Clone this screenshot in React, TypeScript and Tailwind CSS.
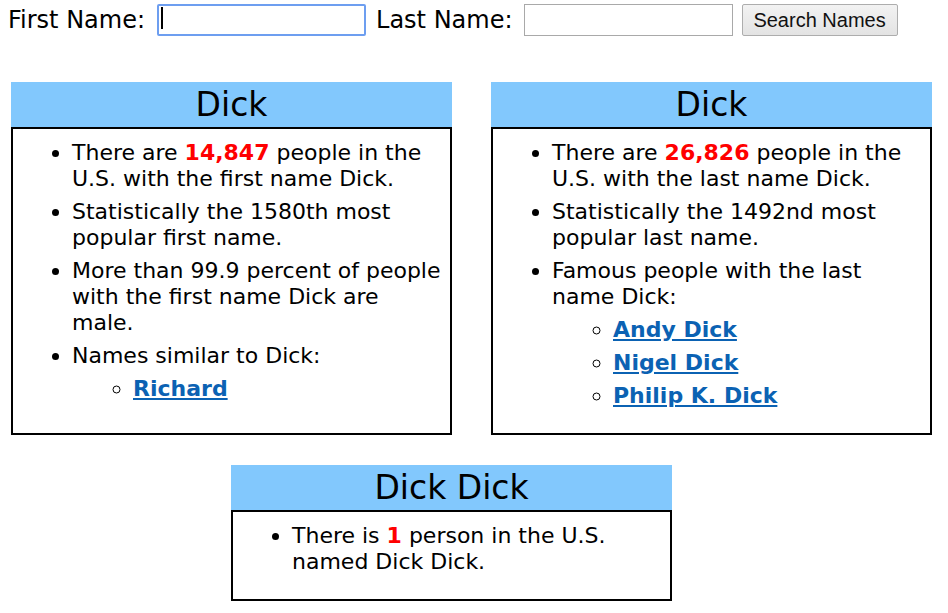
import React from "react";

type Item = { text: React.ReactNode; links?: string[] };

const Card = ({ title, items }: { title: string; items: Item[] }) => (
  <div className="flex flex-col w-[441px]">
    <div className="h-[45px] bg-[#82c8fd] text-center text-[33px] leading-[45px]">{title}</div>
    <div className="flex-1 border-2 border-black">
      <ul className="list-disc pl-[59px] pr-2 pt-[4px] pb-[24px] text-[22px] leading-[26px]">
        {items.map((it, i) => (
          <li key={i} className="mt-[7px]">
            {it.text}
            {it.links && (
              <ul className="list-[circle] pl-[61px]">
                {it.links.map((l) => (
                  <li key={l} className="mt-[7px]">
                    <a href="#" className="font-bold text-[#0b62b3] underline">
                      {l}
                    </a>
                  </li>
                ))}
              </ul>
            )}
          </li>
        ))}
      </ul>
    </div>
  </div>
);

const Num = ({ n }: { n: string }) => <span className="font-bold text-[#ff0000]">{n}</span>;

export default function App() {
  return (
    <div className="min-h-screen bg-white text-black font-['DejaVu_Sans',Verdana,sans-serif]">
      {/* Search bar */}
      <div className="flex items-center pl-[8px] pt-[2px] text-[24px]">
        <span>First Name:</span>
        <div className="relative ml-[12px]">
          <input className="w-[209px] h-[32px] border-2 border-[#6d9ef0] rounded-[2px] outline-none bg-white" />
          <span className="absolute left-[4px] top-[5px] w-[2px] h-[22px] bg-black" />
        </div>
        <span className="ml-[10px]">Last Name:</span>
        <input className="ml-[11px] w-[209px] h-[32px] border border-[#a9a9a9] outline-none bg-white" />
        <button className="ml-[9px] w-[156px] h-[32px] border border-[#adadad] rounded-[2px] bg-gradient-to-b from-[#f2f2f2] to-[#e3e3e3] font-['Liberation_Sans',Arial,sans-serif] text-[20px] text-[#111]">
          Search Names
        </button>
      </div>

      <div className="grid grid-cols-[441px_441px] gap-x-[39px] ml-[11px] mt-[44px]">
        <Card
          title="Dick"
          items={[
            { text: <>There are <Num n="14,847" /> people in the U.S. with the first name Dick.</> },
            { text: "Statistically the 1580th most popular first name." },
            { text: "More than 99.9 percent of people with the first name Dick are male." },
            { text: "Names similar to Dick:", links: ["Richard"] },
          ]}
        />
        <Card
          title="Dick"
          items={[
            { text: <>There are <Num n="26,826" /> people in the U.S. with the last name Dick.</> },
            { text: "Statistically the 1492nd most popular last name." },
            { text: "Famous people with the last name Dick:", links: ["Andy Dick", "Nigel Dick", "Philip K. Dick"] },
          ]}
        />
      </div>

      <div className="ml-[231px] mt-[30px]">
        <Card
          title="Dick Dick"
          items={[{ text: <>There is <Num n="1" /> person in the U.S. named Dick Dick.</> }]}
        />
      </div>
    </div>
  );
}
